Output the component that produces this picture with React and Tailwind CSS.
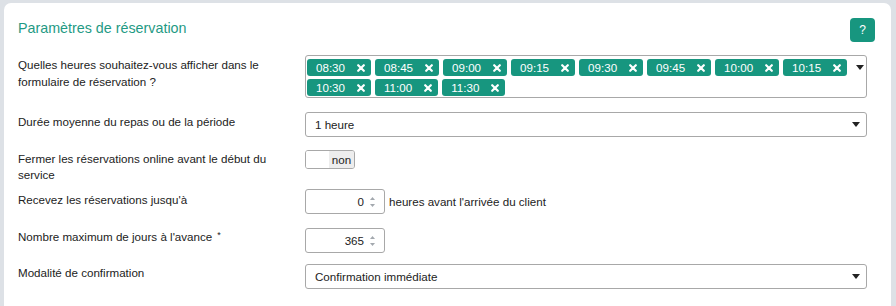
import React from "react";

const hours = ["08:30", "08:45", "09:00", "09:15", "09:30", "09:45", "10:00", "10:15", "10:30", "11:00", "11:30"];

function Caret() {
  return (
    <svg width="8" height="5" viewBox="0 0 8 5" className="shrink-0">
      <path d="M0 0 L8 0 L4 5 Z" fill="#222" />
    </svg>
  );
}

function Tag({ label }) {
  return (
    <span className="flex h-[17px] items-center gap-[12px] rounded-[3px] bg-[#17967f] pl-[9px] pr-[6px] text-[11.6px] leading-none text-white">
      {label}
      <svg width="8" height="8" viewBox="0 0 8 8">
        <path d="M1.2 1.2 L6.8 6.8 M6.8 1.2 L1.2 6.8" stroke="#fff" strokeWidth="2.2" strokeLinecap="round" />
      </svg>
    </span>
  );
}

function Spinner() {
  return (
    <svg width="7" height="14" viewBox="0 0 7 14" className="ml-[5px]">
      <path d="M1 5 L3.5 2 L6 5 Z" fill="#a3a8ae" />
      <path d="M1 9 L3.5 12 L6 9 Z" fill="#a3a8ae" />
    </svg>
  );
}

function Row({ label, children, className = "", labelClass = "" }) {
  return (
    <div className={"flex " + className}>
      <div className={"w-[287px] shrink-0 pr-6 text-[11.6px] leading-[16px] text-[#222] " + labelClass}>{label}</div>
      <div className="flex-1">{children}</div>
    </div>
  );
}

export default function App() {
  return (
    <div className="h-[306px] overflow-hidden bg-[#dde1e6] pl-[4px] pr-[5px] pt-[3px] font-['Liberation_Sans',Arial,sans-serif]">
      <div className="h-[320px] rounded-[7px] bg-white pl-[14px] pr-[24px] pt-[15px]">
        <div className="flex h-[24px] items-start justify-between">
          <h1 className="mt-[1px] text-[14.3px] leading-[18px] text-[#1f9a84]">Paramètres de réservation</h1>
          <button className="mr-[-8px] flex h-[24px] w-[25px] items-center justify-center rounded-[4px] bg-[#17967f] text-[12px] text-white">
            ?
          </button>
        </div>

        <Row label="Quelles heures souhaitez-vous afficher dans le formulaire de réservation ?" className="mt-[13px] h-[57px]" labelClass="pt-[1px] leading-[17px]">
          <div className="flex h-[43px] items-start rounded-[3px] border border-[#a8a8a8] pl-[1px] pr-[2px] pt-[3px]">
            <div className="flex flex-1 flex-wrap gap-x-[4px] gap-y-[3px] pr-[4px]">
              {hours.map((h) => (
                <Tag key={h} label={h} />
              ))}
            </div>
            <div className="pt-[6px]">
              <Caret />
            </div>
          </div>
        </Row>

        <Row label="Durée moyenne du repas ou de la période" className="h-[38px]" labelClass="pt-[2px]">
          <div className="flex h-[25px] items-center justify-between rounded-[3px] border border-[#a8a8a8] pl-[9px] pr-[6px] text-[11.6px] text-[#222]">
            1 heure
            <Caret />
          </div>
        </Row>

        <Row label="Fermer les réservations online avant le début du service" className="h-[39px]" labelClass="pt-[1px]">
          <div className="flex h-[19px] w-[50px] overflow-hidden rounded-[3px] border border-[#a8a8a8] text-[11.6px] text-[#222]">
            <div className="w-[23px] bg-white" />
            <div className="flex flex-1 items-center justify-center bg-[#ededed]">non</div>
          </div>
        </Row>

        <Row label="Recevez les réservations jusqu'à" className="h-[39px]" labelClass="pt-[3px]">
          <div className="flex items-center gap-[4px] text-[11.6px] text-[#222]">
            <div className="flex h-[25px] w-[80px] items-center justify-end rounded-[3px] border border-[#a8a8a8] pr-[8px]">
              0
              <Spinner />
            </div>
            heures avant l'arrivée du client
          </div>
        </Row>

        <Row
          label={
            <>
              Nombre maximum de jours à l'avance
              <span className="relative top-[-3px] ml-[5px] text-[9px]">*</span>
            </>
          }
          className="h-[36px]"
          labelClass="pt-[1px]"
        >
          <div className="flex h-[25px] w-[80px] items-center justify-end rounded-[3px] border border-[#a8a8a8] pr-[8px] text-[11.6px] text-[#222]">
            365
            <Spinner />
          </div>
        </Row>

        <Row label="Modalité de confirmation" labelClass="pt-[1px]">
          <div className="flex h-[25px] items-center justify-between rounded-[3px] border border-[#a8a8a8] pl-[9px] pr-[6px] text-[11.6px] text-[#222]">
            Confirmation immédiate
            <Caret />
          </div>
        </Row>
      </div>
    </div>
  );
}
